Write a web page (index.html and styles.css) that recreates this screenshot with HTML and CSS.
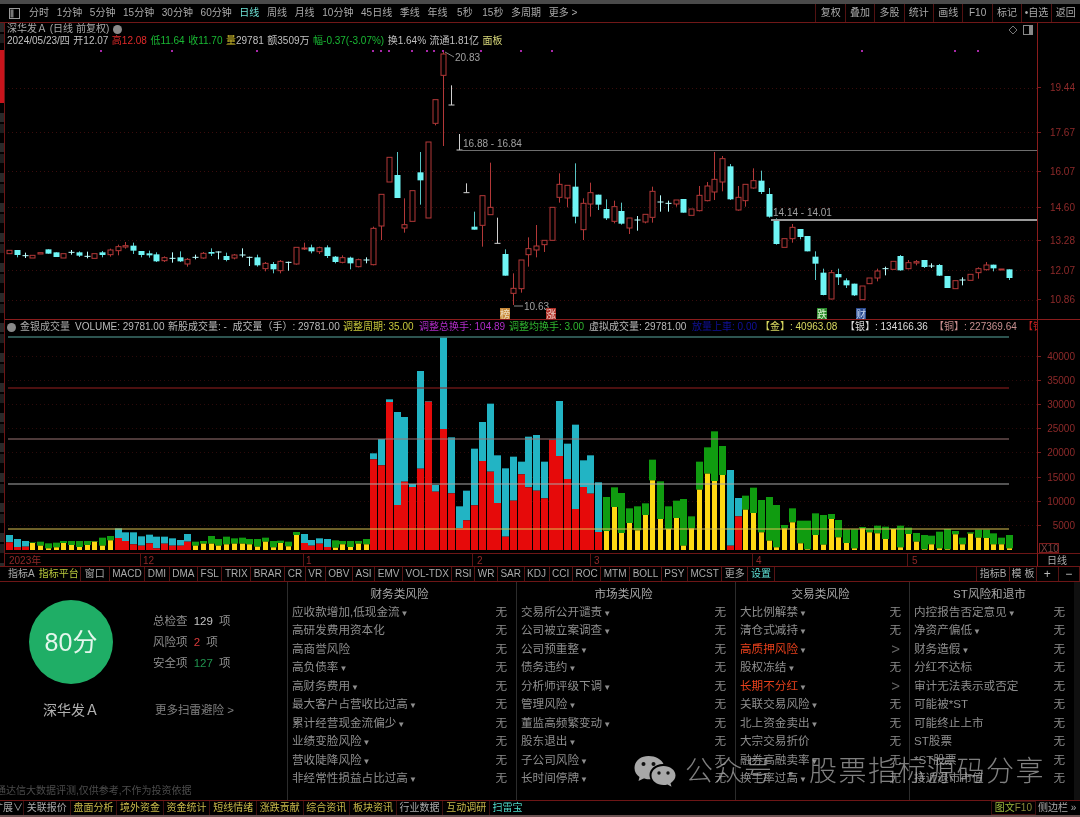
FILE: index.html
```html
<!DOCTYPE html>
<html lang="zh-CN">
<head>
<meta charset="utf-8">
<title>深华发A 日线</title>
<link rel="stylesheet" href="styles.css">
</head>
<body>
<div class="app">
  <div class="top-strip"></div>
  <header class="toolbar">
    <svg class="tool-icon" viewBox="0 0 11 11"><rect x="0.5" y="0.5" width="10" height="10" fill="none" stroke="#999"/><rect x="1.5" y="1.5" width="3" height="8" fill="#777"/></svg>
    <nav class="periods">
      <span>分时</span><span>1分钟</span><span>5分钟</span><span>15分钟</span><span>30分钟</span><span>60分钟</span><span class="active">日线</span><span>周线</span><span>月线</span><span>10分钟</span><span>45日线</span><span>季线</span><span>年线</span><span class="wide">5秒</span><span class="wide">15秒</span><span>多周期</span><span>更多 &gt;</span>
    </nav>
    <nav class="actions">
      <span>复权</span><span>叠加</span><span>多股</span><span>统计</span><span>画线</span><span>F10</span><span>标记</span><span>•自选</span><span>返回</span>
    </nav>
  </header>

  <main class="charts">
    <div class="rail"><div class="rail-red"></div></div>

    <section class="price-pane">
      <div class="info">
        <div class="info-title"><span>深华发Ａ (日线 前复权)</span><i class="round-btn"></i></div>
        <div class="info-data">
          <span>2024/05/23/四</span><span>开12.07</span>
          <span class="red">高12.08</span>
          <span class="green">低11.64</span>
          <span class="green">收11.70</span>
          <span><b class="yellow">量</b>29781</span>
          <span>额3509万</span>
          <span class="green">幅-0.37(-3.07%)</span>
          <span>换1.64%</span>
          <span>流通1.81亿</span>
          <span class="pale-yellow">面板</span>
        </div>
        <div class="pane-icons">
          <svg viewBox="0 0 10 10"><path d="M5 1 9 5 5 9 1 5Z" fill="none" stroke="#777"/></svg>
          <svg viewBox="0 0 10 10"><rect x="0.5" y="0.5" width="9" height="9" fill="none" stroke="#888"/><rect x="6" y="1" width="3" height="8" fill="#888"/></svg>
        </div>
      </div>
      <svg id="price" class="chart" viewBox="5 47 1032 272"></svg>
    </section>
    <aside class="axis"><svg id="price-axis" viewBox="1038 23 42 296"></svg></aside>

    <section class="volume-pane">
      <div class="vol-head">
        <i class="round-btn"></i>
        <span class="vh a">金银成交量</span>
        <span class="vh b">VOLUME: 29781.00</span>
        <span class="vh c">新股成交量: -&nbsp; 成交量（手）: 29781.00</span>
        <span class="vh d">调整周期: 35.00</span>
        <span class="vh e">调整总换手: 104.89</span>
        <span class="vh f">调整均换手: 3.00</span>
        <span class="vh g">虚拟成交量: 29781.00</span>
        <span class="vh h">放量上車: 0.00</span>
        <span class="vh i">【金】: 40963.08</span>
        <span class="vh j">【银】: 134166.36</span>
        <span class="vh k">【铜】: 227369.64</span>
        <span class="vh l">【铁】</span>
      </div>
      <svg id="volume" class="chart" viewBox="5 334 1032 219"></svg>
    </section>
    <aside class="axis axis-top"><svg id="volume-axis" viewBox="1038 320 42 233"></svg></aside>

    <div class="dates"><svg id="dates" viewBox="5 554 1032 12"></svg></div>
    <div class="dates-axis">日线</div>
  </main>

  <nav class="indicators">
    <span class="plain">指标A</span><span class="plain lime">指标平台</span><span class="gap-l">窗口</span><span>MACD</span><span>DMI</span><span>DMA</span><span>FSL</span><span>TRIX</span><span>BRAR</span><span>CR</span><span>VR</span><span>OBV</span><span>ASI</span><span>EMV</span><span>VOL-TDX</span><span>RSI</span><span>WR</span><span>SAR</span><span>KDJ</span><span>CCI</span><span>ROC</span><span>MTM</span><span>BOLL</span><span>PSY</span><span>MCST</span><span>更多</span><span class="cyan">设置</span>
    <span class="push">指标B</span><span class="tpl">模 板</span><span class="sym">+</span><span class="sym">−</span>
  </nav>

  <section class="risk">
    <div class="summary">
      <div class="summary-main">
        <div class="score">
          <div class="score-circle">80分</div>
          <div class="score-name">深华发Ａ</div>
        </div>
        <div class="stats">
          <p>总检查 <b>129</b> 项</p>
          <p>风险项 <b class="red">2</b> 项</p>
          <p>安全项 <b class="safe">127</b> 项</p>
          <a class="more">更多扫雷避险 &gt;</a>
        </div>
      </div>
      <div class="disclaimer">通达信大数据评测,仅供参考,不作为投资依据</div>
    </div>
    <div class="risk-col c1" id="col1"><h3>财务类风险</h3></div>
    <div class="risk-col c2" id="col2"><h3>市场类风险</h3></div>
    <div class="risk-col c3" id="col3"><h3>交易类风险</h3></div>
    <div class="risk-col c4" id="col4"><h3>ST风险和退市</h3></div>
    <div class="watermark">
      <svg viewBox="0 0 42 32"><path d="M14 0C6 0 0 5 0 12c0 4 2 7 5 9l-1 4 5-2.500c2 .6 3 .8 5 .8 1 0 1.500 0 2-.1C15.500 22 15 20.500 15 19c0-6 6-11 13-11h1C27 3.500 21 0 14 0Z" fill="#a8a8a8"/><circle cx="9" cy="8" r="2" fill="#111"/><circle cx="19" cy="8" r="2" fill="#111"/><path d="M29 10c-6.500 0-12 4-12 9.500S22.500 29 29 29c1.500 0 2.500-.2 4-.6l4 2.300-1-3.500c3-2 5-4.700 5-7.700C41 14 35.500 10 29 10Z" fill="#a8a8a8"/><circle cx="24.500" cy="17" r="1.700" fill="#111"/><circle cx="33.500" cy="17" r="1.700" fill="#111"/></svg>
      <span>公众号 · 股票指标源码分享</span>
    </div>
  </section>

  <footer class="bottom-tabs">
    <span class="first"><i>扩展∨</i></span>
    <span>关联报价</span><span class="gold">盘面分析</span><span class="gold">境外资金</span><span class="gold">资金统计</span><span class="gold">短线情绪</span><span class="gold">涨跌贡献</span><span class="gold">综合资讯</span><span class="gold">板块资讯</span><span>行业数据</span><span class="gold">互动调研</span><span class="cyan">扫雷宝</span>
    <em class="f10"><b>图文</b>F10</em><em class="side">侧边栏 »</em>
  </footer>
  <div class="bottom-line"></div>
</div>
<script src="chart.js"></script>
</body>
</html>
```
FILE: styles.css
```css
* { box-sizing: border-box; }
html, body { margin: 0; padding: 0; background: #000; }
body {
  width: 1080px; height: 817px; overflow: hidden;
  font: 10px/1.2 "Liberation Sans", "Noto Sans CJK SC", sans-serif;
  color: #b8b8b8;
}
.app { display: flex; flex-direction: column; width: 1080px; height: 817px; filter: blur(.35px); }
.top-strip { height: 4px; background: #4a4a4a; }

.toolbar { display: flex; align-items: center; height: 19px; border-bottom: 1px solid #701818; color: #aaa; }
.tool-icon { width: 11px; height: 11px; margin-left: 9px; }
.periods { display: flex; gap: 7.650px; margin-left: 9px; }
.periods .active { color: #6fe5d8; }
.periods .wide { margin-left: 2px; }
.actions { display: flex; margin-left: auto; height: 100%; }
.actions span { width: 29.4px; display: flex; align-items: center; justify-content: center; border-left: 1px solid #521212; }

.charts { display: grid; grid-template-columns: 5px 1032px 43px; grid-template-rows: 296px 234px 13px; }
.rail {
  grid-row: 1 / 4; border-right: 1px solid #6d1616; padding-top: 27px;
  background: repeating-linear-gradient(180deg, #2a2a2a 0 9px, #000 9px 11px, #1e1e1e 11px 20px, #000 20px 30px);
}
.rail-red { height: 53px; background: #c8141c; }

.price-pane, .volume-pane { display: flex; flex-direction: column; min-width: 0; }
.chart { display: block; width: 1032px; }
#price { height: 272px; }
#volume { height: 219px; }
svg text { font-family: "Liberation Sans", "Noto Sans CJK SC", sans-serif; }

.info { position: relative; height: 24px; padding-left: 2px; }
.info-title { display: flex; align-items: center; height: 12px; gap: 4px; color: #aaa; }
.info-data { display: flex; height: 12px; gap: 3.500px; white-space: nowrap; color: #c0c0c0; }
.info-data b { font-weight: normal; }
.pane-icons { position: absolute; right: 4px; top: 2px; display: flex; gap: 5px; }
.pane-icons svg { width: 10px; height: 10px; }
.round-btn { display: inline-block; width: 9px; height: 9px; border-radius: 50%; background: #8a8a8a; }
.red { color: #e22a2a; }
.green { color: #19b833; }
.yellow { color: #d6c22c; }
.pale-yellow { color: #d8d87a; }
.cyan { color: #5fe3d8; }

.axis { border-left: 1px solid #8a1c1c; }
.axis svg { display: block; width: 42px; height: 100%; }
.axis-top { border-top: 1px solid #8a1c1c; }

.vol-head { position: relative; height: 15px; border-top: 1px solid #8a1c1c; white-space: nowrap; overflow: hidden; }
.vol-head .round-btn { position: absolute; left: 2px; top: 3px; }
.vh { position: absolute; top: 1px; }
.vh.a { left: 15px; color: #aaa; }
.vh.b { left: 70px; color: #bbb; }
.vh.c { left: 163px; color: #bbb; }
.vh.d { left: 338px; color: #c8c83c; }
.vh.e { left: 414px; color: #b02cc8; }
.vh.f { left: 504px; color: #2fb52f; }
.vh.g { left: 584px; color: #bbb; }
.vh.h { left: 687px; color: #10109a; }
.vh.i { left: 755px; color: #d8d860; }
.vh.j { left: 840px; color: #ddd; }
.vh.k { left: 929px; color: #c89090; }
.vh.l { left: 1018px; color: #c82020; }

.dates { border-top: 1px solid #6d1616; overflow: hidden; }
.dates svg { display: block; width: 1032px; height: 12px; }
.dates-axis { border-left: 1px solid #8a1c1c; border-top: 1px solid #6d1616; padding: 1px 0 0 9px; color: #aaa; line-height: 12px; }

.indicators { display: flex; height: 16px; padding-left: 6px; border-top: 1px solid #6d1616; border-bottom: 1px solid #6d1616; color: #aaa; }
.indicators span { display: flex; align-items: center; padding: 0 2.550px; border-right: 1px solid #541414; white-space: nowrap; }
.indicators .plain { border-right: 0; padding: 0 2px; }
.indicators .lime { color: #b8c83c; padding-right: 1px; border-right: 1px solid #541414; }
.indicators .gap-l { padding: 0 4px; }
.indicators .cyan { color: #5fe3d8; }
.indicators .push { width: 34px; margin-left: auto; border-left: 1px solid #541414; justify-content: center; padding: 0; }
.indicators .tpl { width: 27px; justify-content: center; padding: 0; }
.indicators .sym { width: 21.500px; justify-content: center; color: #bbb; font-size: 12px; padding: 0; }

.risk { position: relative; display: flex; height: 218px; border-right: 6px solid #101010; }
.summary { display: flex; flex-direction: column; width: 287px; }
.summary-main { display: flex; }
.score { width: 142px; padding-top: 18px; text-align: center; }
.score-circle {
  width: 84px; height: 84px; margin: 0 auto; border-radius: 50%; background: #1fae66;
  color: #e4f6ec; font-size: 25px; line-height: 84px; text-align: center;
}
.score-name { margin-top: 17px; font-size: 14px; line-height: 18px; color: #b0b0b0; }
.stats { margin-left: 11px; padding-top: 29px; font-size: 11.500px; color: #8f8f8f; }
.stats p { margin: 0; height: 21px; line-height: 21px; }
.stats b { font-weight: normal; color: #c4c4c4; margin: 0 3px; }
.stats .red { color: #d83a3a; }
.stats .safe { color: #20944f; }
.more { display: block; margin: 28px 0 0 2px; line-height: 16px; color: #808080; }
.disclaimer { margin: auto 0 2px -4px; line-height: 14px; color: #4c4c4c; white-space: nowrap; }

.risk-col { padding: 0 9px 0 4px; border-left: 1px solid #2c2c2c; font-size: 11.600px; color: #8e8e8e; }
.c1 { width: 229px; }
.c2 { width: 219px; }
.c3 { width: 174px; padding-right: 8px; }
.c4 { flex: 1; }
.risk-col h3 { margin: 0; height: 21px; line-height: 24px; font-size: 11.600px; font-weight: normal; text-align: center; color: #a8a8a8; }
.row { display: flex; justify-content: space-between; height: 18.450px; line-height: 18.450px; white-space: nowrap; }
.row .mark { font-size: 8px; color: #8e8e8e; margin-left: 1px; }
.row.hit .name { color: #e8401c; }
.row em { font-style: normal; color: #8e8e8e; }
.row.hit em { font-size: 15px; color: #666; padding-right: 1px; }

.watermark {
  position: absolute; left: 634px; top: 173px; display: flex; align-items: center; gap: 8px;
  color: rgba(178, 178, 178, .72); font-size: 28px; font-weight: 300; letter-spacing: 1.500px; word-spacing: 3px; white-space: nowrap;
}
.watermark svg { width: 43px; height: 32px; }

.bottom-tabs { display: flex; height: 15px; border-top: 1px solid #6d1616; color: #aaa; line-height: 14px; white-space: nowrap; }
.bottom-tabs span { width: 46.600px; text-align: center; border-right: 1px solid #3c1010; }
.bottom-tabs .first { display: flex; justify-content: flex-end; width: 24px; overflow: hidden; }
.bottom-tabs .first i { flex: none; font-style: normal; }
.bottom-tabs .gold { color: #c8b84a; }
.bottom-tabs .cyan { width: 35px; color: #4fd8c8; border-right: 0; }
.bottom-tabs em { font-style: normal; }
.bottom-tabs .f10 { margin-left: auto; padding: 0 3px; border: 1px solid #3c1010; color: #8a8a3a; line-height: 12px; }
.bottom-tabs .f10 b { font-weight: normal; color: #9ab83c; }
.bottom-tabs .side { width: 44px; padding-left: 2px; color: #aaa; }
.bottom-line { height: 2px; background: #6e5252; }
```
FILE: chart.js
```js
// Candles: [type, bodyTop, bodyBottom, wickTop, wickBottom] in 1/3 px rows above y=50.
var candles = [
['r',601,611],['c',600,615,600,622],['x',617,617,608,624],['r',616,624],['r',608,612],['c',598,611],['c',607,621],['r',611,624],['x',607,607,600,614],['c',607,617,604,621],
['x',619,619,605,625],['r',611,625],['c',607,615,603,622],['r',600,614,596,620],['r',590,602,584,616],['r',587,591,576,596],['c',587,602,578,612],['c',603,615,603,622],['c',610,616,602,623],['c',613,634,607,636],
['r',623,632,619,636],['x',625,625,607,638],['c',622,634,604,636],['r',628,642,624,650],['x',622,622,614,628],['r',610,624,606,626],['c',606,611,595,618],['x',606,606,604,628],['c',618,630,608,634],['r',615,624,612,628],
['x',615,615,595,622],['x',622,622,620,648],['c',622,646,614,650],['r',640,656,636,664],['c',642,658,636,670],['r',634,662,630,670],['x',637,637,635,662],['r',592,642,592,644],['r',594,597,578,600],['c',592,604,584,610],
['r',593,605,590,612],['c',592,618,586,624],['c',620,636,618,640],['r',623,637,616,640],['c',623,640,620,658],['r',629,650,626,652],['x',630,630,622,640],['r',535,644,530,646],['r',433,528,433,570],['r',322,396],
['c',375,444,306,444],['r',524,534,445,548],['r',422,514],['c',367,391,306,464],['r',276,504],['r',149,220,149,226],['r',12,76,6,288],['t',165,165,106,165],['t',300,300,252,300],['t',428,428,400,428],
['c',530,539,485,539],['r',437,526,437,590],['r',472,494,338,494],['t',580,580,503,580],['c',612,677,598,677],['r',715,730,670,765],['r',630,716,630,728],['r',596,614,562,650],['r',588,600,525,622],
['r',571,584,571,606],['r',472,571],['r',403,442,370,458],['r',406,444,406,472],['c',410,500,340,520],['r',460,539,445,570],['r',428,462,398,500],['c',434,464,434,480],['c',477,505,448,510],['r',470,514,452,520],
['c',483,521,458,524],['r',504,534,504,552],['x',510,510,498,542],['r',493,516,493,520],['r',424,502,410,518],['x',456,456,436,485],['x',460,460,452,485],['r',450,462,450,470],['c',447,488],['r',477,496],
['r',436,482,408,484],['r',408,452,396,454],['r',388,426,306,450],['r',326,396,318,424],['c',349,448,342,450],['r',442,480,408,482],['r',403,452,403,470],['r',392,414,355,416],['c',392,426,362,432],['c',432,500,414,503],
['c',512,582,505,584],['r',566,592],['r',532,566,522,578],['c',537,561,537,568],['c',558,604],['c',620,641,604,690],['c',668,735,656,736],['r',668,747,660,748],['c',672,682,656,705],['c',691,706,685,714],
['c',701,736,701,738],['r',708,749],['r',684,701],['r',663,684,656,694],['x',656,656,650,676],['r',634,658],['c',618,661,615,662],['r',638,656,630,658],['r',635,639,630,646],['c',630,651,630,654],
['x',648,648,640,654],['c',645,677,642,678],['c',678,714],['r',692,716],['x',690,690,682,706],['r',673,691],['r',656,668,652,686],['r',645,659,636,662],['c',644,655,644,664],['r',657,660],['c',658,684,658,690]
];
// Volume: [top, split, kind], kind 0 = red below cyan, 1 = yellow below green. Rows in 1/3 px below y=315.
var vols = [
[660,682,0],[672,696,0],[678,695,0],[682,684,1],[680,692,1],[685,700,1],[683,697,1],[678,684,1],[678,690,1],[678,696,1],
[678,690,1],[678,680,1],[668,692,1],[663,676,1],[640,669,0],[652,678,0],[652,688,0],[664,692,0],[659,685,0],[665,700,0],
[665,686,0],[670,692,0],[675,692,0],[657,680,0],[680,692,1],[678,686,1],[663,686,1],[672,692,1],[665,688,1],[670,686,1],
[668,686,1],[672,688,1],[672,695,1],[668,680,1],[678,697,1],[677,684,1],[680,694,1],[651,660,1],[657,684,0],[675,692,0],
[670,686,0],[672,696,0],[676,698,1],[678,688,1],[678,696,1],[678,686,1],[672,688,1],[415,433,0],[372,451,0],[253,261,0],
[291,570,0],[306,500,0],[507,516,0],[168,461,0],[258,260,0],[510,530,0],[68,342,0],[367,535,0],[574,640,0],[527,616,0],
[401,571,0],[321,438,0],[266,470,0],[421,564,0],[460,665,0],[425,557,0],[440,478,0],[365,517,0],[360,527,0],
[440,550,0],[374,375,0],[258,423,0],[386,492,0],[329,582,0],[436,516,0],[421,536,0],[502,651,0],[546,648,1],[517,576,1],
[534,654,1],[580,624,1],[574,646,1],[565,600,1],[434,496,1],[499,612,1],[574,642,1],[557,609,1],[552,692,1],[604,640,1],
[440,524,1],[397,476,1],[349,498,1],[393,480,1],[465,692,0],[549,604,0],[542,584,1],[518,594,1],[555,652,1],[546,677,1],
[570,697,1],[630,640,1],[580,622,1],[617,685,1],[617,703,1],[595,660,1],[600,689,1],[597,612,1],[615,667,1],[643,684,1],
[643,700,1],[636,640,1],[640,652,1],[632,655,1],[635,672,1],[640,642,1],[632,697,1],[638,657,1],[654,680,1],[660,703,1],
[662,688,1],[650,700,1],[642,703,1],[648,658,1],[668,688,1],[652,656,1],[644,668,1],[644,669,1],[655,688,1],[668,688,1],[660,700,1]
];

function colX(i) { return Math.round(9 + 7.75 * i); }
function rect(x, y, w, h, fill) { return '<rect x="' + x + '" y="' + y + '" width="' + w + '" height="' + h + '" fill="' + fill + '"/>'; }
function line(x1, y1, x2, y2, stroke, extra) { return '<line x1="' + x1 + '" y1="' + y1 + '" x2="' + x2 + '" y2="' + y2 + '" stroke="' + stroke + '" ' + (extra || '') + '/>'; }
function text(x, y, s, fill, extra) { return '<text x="' + x + '" y="' + y + '" fill="' + fill + '" font-size="10" ' + (extra || '') + '>' + s + '</text>'; }

function drawPrice() {
  var o = '', grid = [88, 132, 171, 207, 240, 270, 300];
  grid.forEach(function (y) { o += line(8, y + .5, 1037, y + .5, '#3a0c0c', 'stroke-dasharray="1 3"'); });
  [100, 171, 256, 372, 380, 388, 411, 426, 433, 442, 480, 520, 551, 861, 954, 977].forEach(function (x) { o += rect(x, 50, 2, 2, '#a828a8'); });
  var hollow = '#b33838', fill = '#6ff5f5', white = '#cfcfcf';
  candles.forEach(function (c, i) {
    var x = colX(i), t = 50 + c[1] / 3, b = 50 + c[2] / 3;
    var wt = 50 + (c[3] === undefined ? c[1] : c[3]) / 3, wb = 50 + (c[4] === undefined ? c[2] : c[4]) / 3;
    if (c[0] === 'r') {
      o += line(x + .5, wt, x + .5, t, hollow) + line(x + .5, b, x + .5, wb, hollow);
      o += '<rect x="' + (x - 2) + '" y="' + t + '" width="5" height="' + (b - t) + '" fill="#000" stroke="' + hollow + '"/>';
    } else if (c[0] === 'c') {
      o += line(x + .5, wt, x + .5, wb, fill, 'opacity=".8"') + rect(x - 2.5, t, 6, b - t, fill);
    } else if (c[0] === 'x') {
      o += line(x + .5, wt, x + .5, wb, '#bff') + line(x - 2.5, t, x + 3.5, t, '#bff');
    } else {
      o += line(x + .5, wt, x + .5, wb, white) + line(x - 2.5, wb, x + 3.5, wb, white);
    }
  });
  o += line(457, 150.5, 1037, 150.5, '#6e6e6e');
  o += line(771, 220, 1037, 220, '#9a9a9a', 'stroke-width="2"');
  o += text(455, 61, '20.83', '#a0a0a0') + line(445, 52, 454, 57, '#888');
  o += text(463, 147, '16.88 - 16.84', '#a0a0a0');
  o += text(773, 216, '14.14 - 14.01', '#a0a0a0');
  o += text(524, 310, '10.63', '#a0a0a0') + line(514, 306, 523, 306, '#888');
  [[500, '榜', '#c88a3a', '#f0e0c0'], [546, '涨', '#b03028', '#f0d0c8'], [817, '跌', '#2a8a2a', '#d8f0d0'], [856, '财', '#2a4a90', '#c8d8f0']].forEach(function (m) {
    o += rect(m[0], 308, 10, 11, m[2]) + '<text x="' + m[0] + '" y="317.500" fill="' + m[3] + '" font-size="10">' + m[1] + '</text>';
  });
  document.getElementById('price').innerHTML = o;
}

function drawVolume() {
  var o = '', base = 550;
  [356, 380, 404, 428, 452, 477, 501, 525].forEach(function (y) { o += line(8, y + .5, 1037, y + .5, '#2c0a0a', 'stroke-dasharray="1 3"'); });
  vols.forEach(function (v, i) {
    var x = colX(i) - 3, t = 315 + v[0] / 3, s = 315 + v[1] / 3;
    o += rect(x, t, 7, s - t, v[2] ? '#109c10' : '#22b4c4');
    o += v[2] ? rect(x + 1, s, 5, base - s, '#ffd814') : rect(x, s, 7, base - s, '#e60a0a');
  });
  o += line(8, 337, 1009, 337, '#5aa8a0');
  o += line(8, 388, 1009, 388, '#9a2020');
  o += line(8, 439, 1009, 439, '#9a7474');
  o += line(8, 484, 1009, 484, '#a8a8a8');
  o += line(8, 529, 1009, 529, '#d8c050');
  document.getElementById('volume').innerHTML = o;
}

function drawAxes() {
  var red = '#8e2a2a', o = '';
  [[19.44, 87], [17.67, 132], [16.07, 171], [14.60, 207], [13.28, 240], [12.07, 270], [10.86, 299]].forEach(function (a) {
    o += line(1038, a[1] + .5, 1041, a[1] + .5, '#7a1c1c') + text(1075, a[1] + 3.5, a[0].toFixed(2), red, 'text-anchor="end"');
  });
  document.getElementById('price-axis').innerHTML = o;
  o = '';
  [[40000, 356], [35000, 380], [30000, 404], [25000, 428], [20000, 452], [15000, 477], [10000, 501], [5000, 525]].forEach(function (a) {
    o += line(1038, a[1] + .5, 1041, a[1] + .5, '#7a1c1c') + text(1075, a[1] + 3.5, a[0], red, 'text-anchor="end"');
  });
  o += '<rect x="1039.500" y="543.500" width="19" height="9" fill="none" stroke="#7a1c1c"/>' + text(1041, 552, 'X10', '#7a4040');
  document.getElementById('volume-axis').innerHTML = o;
}

function drawDates() {
  var o = '';
  [[9, '2023年', 0], [141, '12', 140], [304, '1', 303], [475, '2', 472], [592, '3', 590], [754, '4', 752], [910, '5', 907]].forEach(function (d) {
    if (d[2]) o += line(d[2] + .5, 554, d[2] + .5, 566, '#5a1414');
    o += text(d[0] + (d[2] ? 2 : 0), 564, d[1], '#902828');
  });
  document.getElementById('dates').innerHTML = o;
}

var risks = {
  col1: ['应收款增加,低现金流|v', '高研发费用资本化', '高商誉风险', '高负债率|v', '高财务费用|v', '最大客户占营收比过高|v', '累计经营现金流偏少|v', '业绩变脸风险|v', '营收陡降风险|v', '非经常性损益占比过高|v'],
  col2: ['交易所公开谴责|v', '公司被立案调查|v', '公司预重整|v', '债务违约|v', '分析师评级下调|v', '管理风险|v', '董监高频繁变动|v', '股东退出|v', '子公司风险|v', '长时间停牌|v'],
  col3: ['大比例解禁|v', '清仓式减持|v', '高质押风险|v|h', '股权冻结|v', '长期不分红|v|h', '关联交易风险|v', '北上资金卖出|v', '大宗交易折价', '融券高融卖率|v', '换手率过高|v'],
  col4: ['内控报告否定意见|v', '净资产偏低|v', '财务造假|v', '分红不达标', '审计无法表示或否定', '可能被*ST', '可能终止上市', 'ST股票', '*ST股票', '接近退市市值']
};
function drawRisks() {
  Object.keys(risks).forEach(function (id) {
    var col = document.getElementById(id);
    risks[id].forEach(function (r) {
      var p = r.split('|'), hit = p[2] === 'h', row = document.createElement('div');
      row.className = 'row' + (hit ? ' hit' : '');
      row.innerHTML = '<span class="name">' + p[0] + (p[1] ? '<span class="mark">▼</span>' : '') + '</span><em>' + (hit ? '&gt;' : '无') + '</em>';
      col.appendChild(row);
    });
  });
}
drawPrice(); drawVolume(); drawAxes(); drawDates(); drawRisks();
```
